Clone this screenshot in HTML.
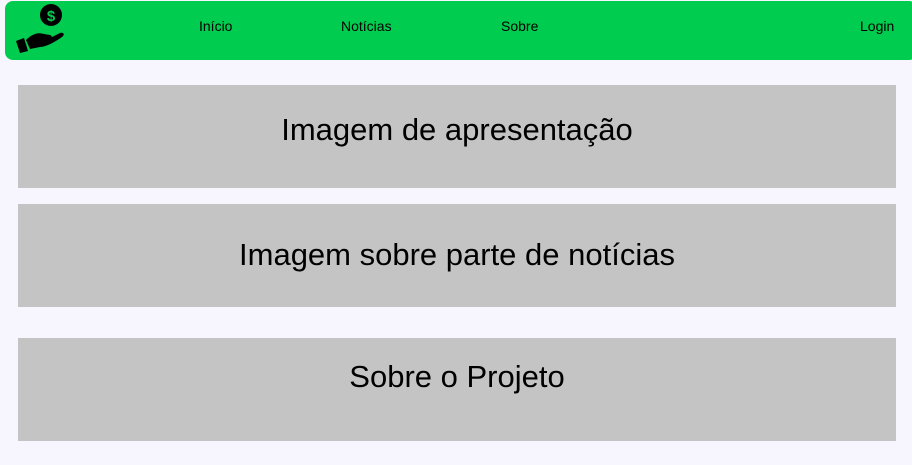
<!DOCTYPE html>
<html><head><meta charset="utf-8"><style>
body{margin:0;width:912px;height:465px;background:#f7f6fe;font-family:"Liberation Sans",sans-serif;position:relative;overflow:hidden}
.hdr{position:absolute;left:5px;top:1px;width:912px;height:59px;background:#00cc4f;border-radius:8px}
.nav{position:absolute;top:18px;font-size:14px;color:#000}
.box{position:absolute;left:18px;width:878px;height:103px;background:#c4c4c4;text-align:center;font-size:31px;color:#000;box-sizing:border-box}
</style></head><body>
<div class="hdr"></div>
<svg style="position:absolute;left:0;top:0" width="80" height="60">
<circle cx="51" cy="15" r="11" fill="#000"/>
<text x="51" y="21" font-size="15" font-weight="bold" fill="#00cc4f" text-anchor="middle" font-family="Liberation Sans">$</text>
<path d="M16 41 L24 38 L28 51 L20 53 Z" fill="#000"/>
<path d="M26 40 C32 34 38 32 44 34 L50 35 C53 36 52 39 49 39 L40 39 L52 37 L60 33 C64 32 65 35 62 37 C55 42 46 47 40 47 L30 49 Z" fill="#000"/>
</svg>
<div class="nav" style="left:199px">Início</div>
<div class="nav" style="left:341px">Notícias</div>
<div class="nav" style="left:501px">Sobre</div>
<div class="nav" style="left:860px">Login</div>
<div class="box" style="top:85px;padding-top:27px">Imagem de apresentação</div>
<div class="box" style="top:204px;padding-top:33px">Imagem sobre parte de notícias</div>
<div class="box" style="top:338px;padding-top:21px">Sobre o Projeto</div>
</body></html>
